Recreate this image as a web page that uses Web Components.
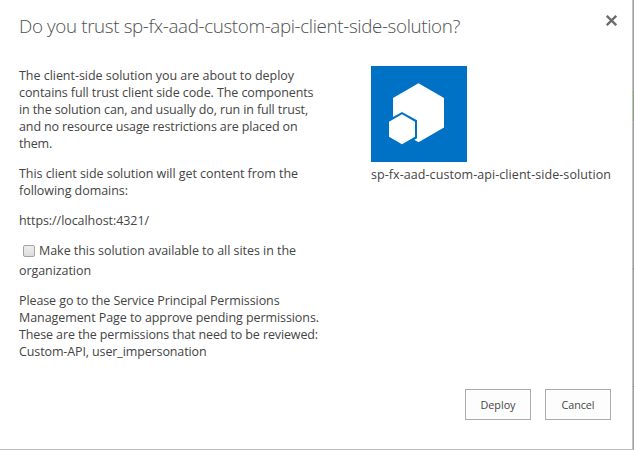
<!DOCTYPE html>
<html lang="en">
<head>
<meta charset="utf-8">
<title>Trust solution</title>
<style>
html, body { margin: 0; height: 100%; overflow: hidden; }
body { font-family: "Open Sans", "Noto Sans", sans-serif; font-size: 12.5px; color: #444;
  background: linear-gradient(#a2a2a2 91px, #8b9f7a 91px 121px, #a2a2a2 121px 268px, #777 268px 269px, #a2a2a2 269px 386px, #777 386px 387px, #a2a2a2 387px); }
</style>
</head>
<body>
<trust-dialog>
  <text-line slot="title" width="441">Do you trust sp-fx-aad-custom-api-client-side-solution?</text-line>
  <text-block>
    <text-line width="275">The client-side solution you are about to deploy</text-line>
    <text-line width="294.5">contains full trust client side code. The components</text-line>
    <text-line width="289">in the solution can, and usually do, run in full trust,</text-line>
    <text-line width="278.5">and no resource usage restrictions are placed on</text-line>
    <text-line width="33">them.</text-line>
  </text-block>
  <text-block>
    <text-line width="279">This client side solution will get content from the</text-line>
    <text-line width="109">following domains:</text-line>
  </text-block>
  <text-block><text-line width="130">https://localhost:4321/</text-line></text-block>
  <text-block style="--gap:3px">
    <check-line><text-line width="257">Make this solution available to all sites in the</text-line></check-line>
    <text-line width="72">organization</text-line>
  </text-block>
  <text-block>
    <text-line width="260.5">Please go to the Service Principal Permissions</text-line>
    <text-line width="300">Management Page to approve pending permissions.</text-line>
    <text-line width="299">These are the permissions that need to be reviewed:</text-line>
    <text-line width="187.5">Custom-API, user_impersonation</text-line>
  </text-block>
  <solution-card slot="aside"><text-line width="240">sp-fx-aad-custom-api-client-side-solution</text-line></solution-card>
  <push-button slot="actions"><text-line width="35">Deploy</text-line></push-button>
  <push-button slot="actions"><text-line width="33">Cancel</text-line></push-button>
</trust-dialog>
<script>
const define = (name, html, setup) => customElements.define(name, class extends HTMLElement {
  constructor() {
    super();
    this.attachShadow({ mode: 'open' }).innerHTML = html;
  }
  connectedCallback() { if (setup) setup(this); }
});

define('trust-dialog', `
<style>
:host { display: grid; grid-template-rows: 67px 1fr 60px; box-sizing: border-box; width: 633px; height: 450px;
  border-right: 1px solid #c2c2c2; border-bottom: 1px solid #bdbdbd; background: #fff; }
header { display: flex; justify-content: space-between; padding: 13px 15px 0 19px; }
.title { font-size: 18.8px; font-weight: 300; color: #505050; --line: 27px; }
button { all: unset; width: 11px; height: 11px; margin-top: 2px; }
svg { display: block; }
main { display: grid; grid-template-columns: 352px 1fr; padding-left: 19px; }
.copy { display: flex; flex-direction: column; gap: 13px; }
footer { display: flex; justify-content: flex-end; gap: 14px; padding-right: 21px; }
</style>
<header>
  <div class="title"><slot name="title"></slot></div>
  <button aria-label="Close"><svg width="11" height="11" viewBox="0 0 11 11"><path d="M.8 .8L10.2 10.2M10.2 .8L.8 10.2" stroke="#6c6c6c" stroke-width="2.3" fill="none"/></svg></button>
</header>
<main><div class="copy"><slot></slot></div><slot name="aside"></slot></main>
<footer><slot name="actions"></slot></footer>`);

define('text-block', `
<style>:host { display: flex; flex-direction: column; gap: var(--gap, 0px); }</style><slot></slot>`);

define('check-line', `
<style>
:host { display: flex; align-items: center; height: 17px; }
i { box-sizing: border-box; width: 12px; height: 12px; margin: 1px 4px 0; border: 1px solid #a3a3a3; border-radius: 2px;
  background: linear-gradient(#eee, #dcdcdc); }
</style><i role="checkbox" aria-checked="false"></i><slot></slot>`);

define('solution-card', `
<style>
:host { display: flex; flex-direction: column; gap: 4px; margin-top: -1px; }
svg { display: block; }
</style>
<svg width="96" height="96" viewBox="0 0 96 96">
  <path fill="#0072c6" d="M0 0H96V96H0Z"/>
  <path fill="#fff" d="M47.5 17.3L73 32V61.5L47.5 76.2L22 61.5V32Z"/>
  <path fill="#0072c6" d="M31 46L46 54.3V72.3L31 81L16 72.3V54.3Z"/>
  <path fill="#fff" d="M31 48.3L44 55.8V70.7L31 78.2L18 70.7V55.8Z"/>
</svg>
<slot></slot>`);

define('push-button', `
<style>
:host { display: block; }
button { display: flex; align-items: center; justify-content: center; box-sizing: border-box; width: 66px; height: 31px;
  padding: 0; border: 1px solid #ababab; background: #fdfdfd; color: #444; font: inherit; font-size: 10.8px; }
</style><button><slot></slot></button>`);

// A single line of text whose letter-spacing is set so that it fills the given width.
define('text-line', `
<style>
:host { display: block; line-height: var(--line, 17px); white-space: nowrap; }
span { display: inline-block; }
</style><span><slot></slot></span>`, el => {
  const span = el.shadowRoot.querySelector('span');
  const spare = +el.getAttribute('width') - span.getBoundingClientRect().width;
  span.style.letterSpacing = spare / el.textContent.length + 'px';
});
</script>
</body>
</html>
